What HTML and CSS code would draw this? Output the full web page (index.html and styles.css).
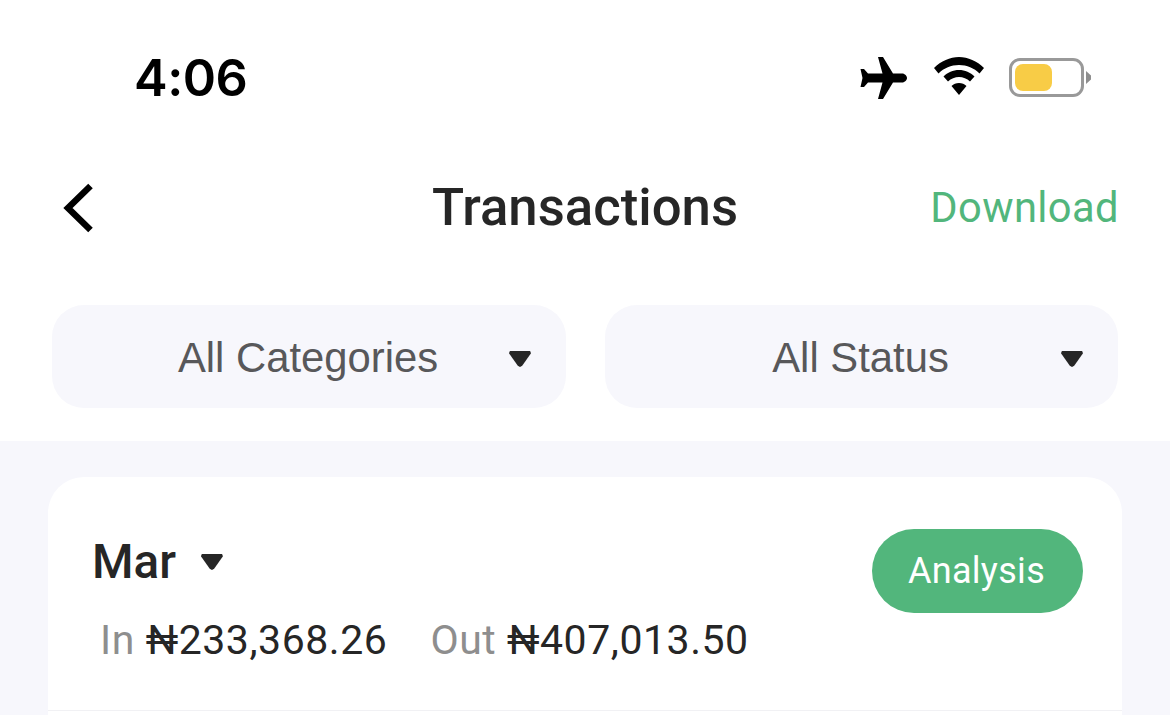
FILE: index.html
```html
<!DOCTYPE html>
<html lang="en">
<head>
<meta charset="utf-8">
<title>Transactions</title>
<link rel="stylesheet" href="styles.css">
</head>
<body>
<div class="screen">
  <div class="status">
    <span class="time">4:06</span>
    <div class="status-icons">
      <svg class="i-plane" width="48" height="44" viewBox="0 0 48 44"><path d="M19 1 L24 1 L34 17.5 L43 17.5 C46 17.5 48 20 48 22 C48 24 46 26.5 43 26.5 L34 26.5 L24 43 L19 43 L23.5 26.5 L9 26.500 L5 31 L1.500 31 L3.500 22 L1.500 13 L5 13 L9 17.500 L23.500 17.500 Z" fill="#000"/></svg>
      <svg class="i-wifi" width="50" height="38" viewBox="0 0 50 38"><path d="M25 0 C34 0 43 4 50 11 L45.500 16.500 C40 11 33 8 25 8 C17 8 10 11 4.500 16.500 L0 11 C7 4 16 0 25 0 Z M25 13 C31 13 36.500 15.500 40.500 19.500 L36 24.500 C33 21.500 29 20 25 20 C21 20 17 21.500 14 24.500 L9.500 19.500 C13.500 15.500 19 13 25 13 Z M25 26 C28 26 30.500 27 32.500 29 L25 38 L17.500 29 C19.500 27 22 26 25 26 Z" fill="#000"/></svg>
      <div class="battery">
        <div class="battery-body"><div class="battery-fill"></div></div>
        <div class="battery-cap"></div>
      </div>
    </div>
  </div>
  <header class="nav">
    <svg class="back" width="34" height="50" viewBox="0 0 34 50"><path d="M30.500 3 L8 25 L30.500 47" fill="none" stroke="#000" stroke-width="6.500"/></svg>
    <h1 class="title">Transactions</h1>
    <a class="download">Download</a>
  </header>
  <div class="filters">
    <div class="filter filter-cat"><span class="filter-label">All Categories</span><span class="caret"></span></div>
    <div class="filter filter-status"><span class="filter-label">All Status</span><span class="caret"></span></div>
  </div>
  <main class="list">
    <section class="card">
      <div class="summary">
        <div class="summary-left">
          <div class="month"><span class="month-name">Mar</span><span class="caret"></span></div>
          <div class="totals">
            <span class="total"><span class="total-label">In</span> ₦233,368.26</span>
            <span class="total"><span class="total-label">Out</span> ₦407,013.50</span>
          </div>
        </div>
        <button class="analysis">Analysis</button>
      </div>
    </section>
  </main>
</div>
</body>
</html>
```
FILE: styles.css
```css
* { box-sizing: border-box; }
html, body { margin: 0; padding: 0; height: 100%; }
body { background: #fff; font-family: Roboto, "Liberation Sans", sans-serif; overflow: hidden; }
.screen { width: 1170px; height: 715px; display: flex; flex-direction: column; overflow: hidden; }
.status { height: 155px; flex: none; display: flex; justify-content: space-between; align-items: flex-start; padding: 49px 79px 0 134px; }
.time { font-family: Inter, "Liberation Sans", sans-serif; font-size: 50.500px; line-height: 58px; font-weight: 600; color: #000; letter-spacing: -0.5px; }
.status-icons { display: flex; align-items: center; padding-top: 7px; }
.i-plane { margin-right: 27px; }
.i-wifi { margin-right: 25px; margin-top: -4px; }
.battery { display: flex; align-items: center; margin-top: -1px; }
.battery-body { width: 75px; height: 39px; border: 3px solid #999; border-radius: 11px; padding: 3px; background: #fff; }
.battery-fill { width: 37px; height: 100%; background: #f8cc46; border-radius: 8px; }
.battery-cap { width: 5px; height: 13px; background: #8e8e8e; clip-path: polygon(0 0, 100% 35%, 100% 65%, 0 100%); margin-left: 2px; }
.nav { height: 106px; flex: none; display: flex; align-items: center; padding: 0 51px 0 60px; position: relative; justify-content: space-between; }
.title { position: absolute; left: 0; right: 0; top: 21px; text-align: center; margin: 0; font-size: 52.700px; line-height: 62px; font-weight: 500; color: #262626; pointer-events: none; }
.download { font-size: 41.700px; color: #52b67c; letter-spacing: 0.4px; position: relative; top: -1px; }
.filters { flex: none; display: flex; gap: 39px; padding: 44px 52px 33px; height: 180px; }
.filter { width: 514px; height: 103px; background: #f7f7fc; border-radius: 32px; display: flex; align-items: center; position: relative; justify-content: center; }
.filter-status { width: 513px; }
.filter-label { font-family: "Liberation Sans", Arial, sans-serif; font-size: 41.800px; color: #58585a; position: relative; top: 1px; left: -1px; }
.filter .caret { position: absolute; right: 35px; top: 46px; }
.caret { width: 22px; height: 16px; background: #262626; clip-path: polygon(4% 0, 96% 0, 100% 14%, 60% 92%, 50% 100%, 40% 92%, 0 14%); display: inline-block; }
.list { flex: 1; background: #f7f7fc; padding: 36px 48px 0; min-height: 0; }
.card { background: #fff; border-radius: 36px 36px 0 0; height: 400px; }
.summary { height: 234px; border-bottom: 1px solid #f1f1f4; padding: 52px 39px 0 45px; display: flex; justify-content: space-between; align-items: flex-start; }
.month { display: flex; align-items: center; height: 64px; margin-top: 1px; margin-left: -1px; }
.month-name { font-size: 47.500px; font-weight: 500; color: #262626; margin-right: 25px; }
.totals { display: flex; gap: 43px; padding-left: 7px; margin-top: 22px; }
.total { font-size: 41px; color: #262626; letter-spacing: 0.55px; line-height: 48px; }
.total-label { color: #8e8e8e; }
.analysis { width: 211px; height: 84px; border: none; background: #52b67c; color: #fff; border-radius: 42px; font-family: Roboto, sans-serif; font-size: 36px; letter-spacing: 0.3px; padding: 0 2px 0 0; }
```
